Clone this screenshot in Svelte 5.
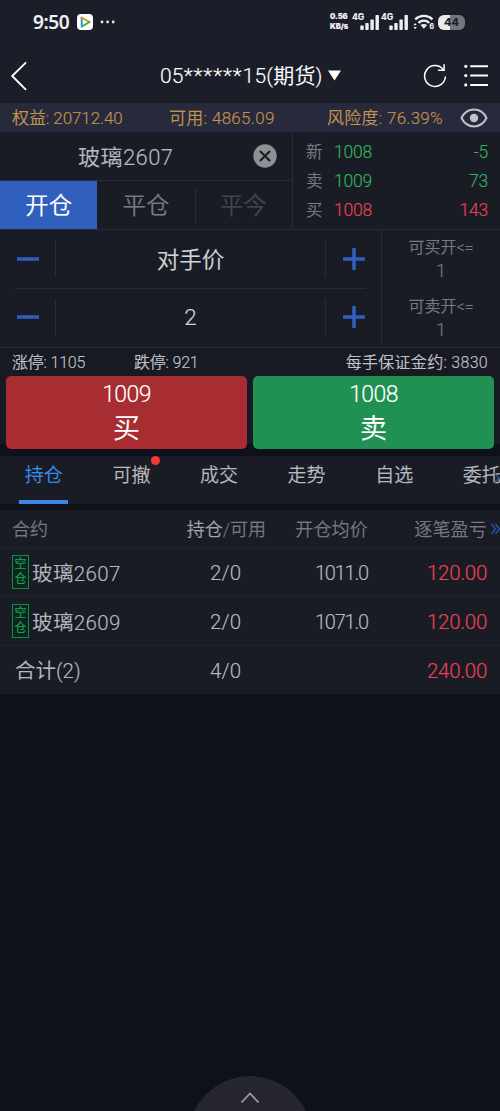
<script>
  const quotes = [
    { k: '新', price: '1008', vol: '-5', c: 'green' },
    { k: '卖', price: '1009', vol: '73', c: 'green' },
    { k: '买', price: '1008', vol: '143', c: 'red' }
  ];
  const tabs = ['持仓', '可撤', '成交', '走势', '自选', '委托'];
  const rows = [
    { name: '玻璃2607', qty: '2/0', avg: '1011.0', pl: '120.00' },
    { name: '玻璃2609', qty: '2/0', avg: '1071.0', pl: '120.00' }
  ];
  const steppers = ['对手价', '2'];
  const limits = ['可买开<=', '可卖开<='];
</script>

<div class="app">
  <div class="status">
    <span class="time">9:50</span>
    <svg class="play" width="16" height="16" viewBox="0 0 16 16">
      <rect width="16" height="16" rx="4" fill="#fff" />
      <path d="M4.7 3.8v8.6" stroke="#2499e8" stroke-width="2" stroke-linecap="round" />
      <path d="M4.7 3.6 12.6 8" stroke="#f58a28" stroke-width="2" stroke-linecap="round" />
      <path d="M12.6 8 5 12.4" stroke="#38b959" stroke-width="2" stroke-linecap="round" />
    </svg>
    <svg class="dots" width="16" height="4" viewBox="0 0 16 4" fill="#e8e9ec">
      <circle cx="2" cy="2" r="1.4" /><circle cx="7.6" cy="2" r="1.4" /><circle cx="13.2" cy="2" r="1.4" />
    </svg>
    <span class="speed"><b>0.56</b><b>KB/s</b></span>
    {#each [0, 1] as i (i)}
      <span class="signal">
        <b>4G</b>
        <svg width="20" height="15" viewBox="0 0 20 15" fill="#eceef1">
          <rect x="0.3" y="10.5" width="3.4" height="4.5" rx="0.7" />
          <rect x="5.3" y="8" width="3.4" height="7" rx="0.7" />
          <rect x="10.4" y="4.5" width="3.4" height="10.5" rx="0.7" />
          <rect x="15.5" y="0" width="3.4" height="15" rx="0.7" />
        </svg>
      </span>
    {/each}
    <span class="wifi">
      <svg width="22" height="16" viewBox="0 0 22 16" fill="none" stroke="#eceef1">
        <path d="M2.2 5.3c5-4.6 12.3-4.6 17.3 0M5.4 8.9c3.2-2.9 7.7-2.9 10.9 0" stroke-width="2.3" />
        <path d="M7.5 11.1c2-1.5 4.7-1.5 6.7 0l-3.3 3.6z" fill="#eceef1" stroke="none" />
        <path d="m.4 11.2 1.7-2.3 1.7 2.3zm0 1.8 1.7 2.3 1.7-2.3z" fill="#eceef1" stroke="none" />
      </svg>
      <b>6</b>
    </span>
    <span class="battery"><span>44</span></span>
  </div>

  <header>
    <svg width="16" height="30" viewBox="0 0 16 30" fill="none" stroke="#fff" stroke-width="1.8" stroke-linecap="round" stroke-linejoin="round"><path d="M14.6 1.8 1.2 15l13.4 13.4" /></svg>
    <div class="account"><span>05<i>******</i>15(期货)</span>
      <svg width="13" height="11" viewBox="0 0 13 11"><path d="M0 .5h13L6.5 10.5z" fill="#fff" /></svg>
    </div>
    <svg class="refresh" width="24" height="26" viewBox="0 0 24 26" fill="none" stroke="#fff" stroke-width="1.5"><path d="M20.2 6.6A10.4 10.4 0 1 0 22.4 13.5M21.1 1.3v6h-6" /></svg>
    <svg class="menu" width="24" height="24" viewBox="0 0 24 24" stroke="#fff" stroke-width="2" fill="#fff"><path d="M6.2 2.3H24M6.2 11.6H24M6.2 20.9H24" /><g stroke="none"><circle cx="1.8" cy="2.3" r="1.6" /><circle cx="1.8" cy="11.6" r="1.6" /><circle cx="1.8" cy="20.9" r="1.6" /></g></svg>
  </header>

  <div class="funds">
    <span>权益: 20712.40</span><span class="wide">可用: 4865.09</span><span>风险度: 76.39%</span>
    <svg width="28" height="20" viewBox="0 0 28 20"><path d="M1.5 10C7-1.2 21-1.2 26.5 10 21 21.2 7 21.2 1.5 10z" fill="none" stroke="#bfc2ce" stroke-width="2" /><circle cx="14" cy="10" r="4.2" fill="#bfc2ce" /></svg>
  </div>

  <section class="top">
    <div class="left">
      <div class="symbol">
        <span>玻璃2607</span>
        <svg width="24" height="24" viewBox="0 0 24 24"><circle cx="12" cy="12" r="11.7" fill="#8e9095" /><path d="m7 7 10 10M17 7 7 17" stroke="#1b1d25" stroke-width="2.2" /></svg>
      </div>
      <div class="modes">
        <div class="mode on">开仓</div>
        <div class="mode">平仓</div>
        <div class="mode off">平今</div>
      </div>
    </div>
    <div class="quotes">
      {#each quotes as q (q.k)}
        <div class="quote"><span class="k">{q.k}</span><span class={q.c}>{q.price}</span><span class="vol {q.c}">{q.vol}</span></div>
      {/each}
    </div>
  </section>

  <section class="order">
    <div class="steps">
      {#each steppers as s (s)}
        <div class="step">
          <div class="side"><svg width="24" height="24" viewBox="0 0 24 24"><path d="M1 12h22" stroke="#315fc0" stroke-width="3.5" /></svg></div>
          <div class="value">{s}</div>
          <div class="side plus"><svg width="24" height="24" viewBox="0 0 24 24"><path d="M1 12h22M12 1v22" stroke="#315fc0" stroke-width="3.5" /></svg></div>
        </div>
      {/each}
    </div>
    <div class="limits">
      {#each limits as l (l)}
        <div class="limit"><span>{l}</span><span>1</span></div>
      {/each}
    </div>
  </section>

  <div class="info"><span>涨停: 1105</span><span>跌停: 921</span><span>每手保证金约: 3830</span></div>

  <div class="actions">
    <div class="action buy"><span>1009</span><strong>买</strong></div>
    <div class="action sell"><span>1008</span><strong>卖</strong></div>
  </div>

  <nav>
    {#each tabs as t, i (t)}
      <div class="tab" class:active={i === 0}><span>{t}</span>{#if i === 1}<em></em>{/if}</div>
    {/each}
    <svg class="more" width="6" height="12" viewBox="0 0 6 12" fill="none" stroke="#2b57ad" stroke-width="1.3"><path d="m0 1 5 5-5 5" /></svg>
  </nav>

  <div class="table">
    <div class="tr head">
      <span>合约</span><span class="qty"><b>持仓</b>/可用</span><span class="avg">开仓均价</span><span class="pl">逐笔盈亏</span>
      <svg class="next" width="9" height="12" viewBox="0 0 9 12" fill="none" stroke="#2b57ad" stroke-width="1.3"><path d="m.5 1 4 5-4 5M4.5 1l4 5-4 5" /></svg>
    </div>
    {#each rows as r (r.name)}
      <div class="tr">
        <span class="name"><span class="tag"><i>空</i><i>仓</i></span>{r.name}</span>
        <span class="qty">{r.qty}</span><span class="avg">{r.avg}</span><span class="pl red">{r.pl}</span>
      </div>
    {/each}
    <div class="tr"><span class="total">合计(2)</span><span class="qty">4/0</span><span class="avg"></span><span class="pl red">240.00</span></div>
  </div>

  <div class="bottom">
    <div class="dome"><svg width="20" height="13" viewBox="0 0 20 13" fill="none" stroke="#a0a1a6" stroke-width="1.7"><path d="m1.5 11.5 8.5-9 8.5 9" /></svg></div>
  </div>
</div>

<style>
  :global(body) { margin: 0; background: #0e1119; }
  * { box-sizing: border-box; }
  i, em { font-style: normal; }
  svg { display: block; flex: none; }
  .app {
    width: 500px; height: 1111px; display: flex; flex-direction: column; overflow: hidden;
    background: #0e1119; color: #b8b9be; white-space: nowrap;
    font-family: Roboto, "Noto Sans CJK SC", sans-serif; font-weight: 350;
    -webkit-text-stroke: 0.15px currentColor;
  }
  .green { color: #31b45c; }
  .red { color: #ec4153; }

  .status { height: 48px; flex: none; display: flex; align-items: center; padding: 0 35px 4px 33px; background: #1b1e28; color: #f1f2f4; }
  .time { width: 44px; font: 600 19px/24px "Open Sans", sans-serif; letter-spacing: -0.4px; }
  .play { flex: none; }
  .dots { margin-left: 7px; }
  .speed { width: 21px; margin-left: auto; display: flex; flex-direction: column; font: 700 7.5px/10px Inter, sans-serif; letter-spacing: -0.1px; }
  .speed b:last-child { letter-spacing: 0; }
  .signal { position: relative; width: 28px; height: 15px; margin-left: 1px; display: flex; justify-content: flex-end; }
  .signal b { position: absolute; left: 0; top: -2px; font: 700 8.6px/8px Inter, sans-serif; }
  .wifi { position: relative; margin-left: 4px; }
  .wifi b { position: absolute; right: 1px; bottom: -1px; font: 700 7px/8px Inter, sans-serif; }
  .battery { width: 27px; height: 15px; margin-left: 3px; border-radius: 6px; display: flex; align-items: center; justify-content: center; background: linear-gradient(90deg, #e9eaec 46%, #74767c 46%); color: #1b1e28; font: 700 11px/15px Inter, sans-serif; }

  header { height: 55px; flex: none; display: flex; align-items: center; padding: 0 12px 0 11px; background: #1b1e28; color: #fff; }
  .account { flex: 1; margin-left: 133px; display: flex; align-items: center; gap: 5px; font-size: 21px; line-height: 30px; }
  .account span { width: 163px; letter-spacing: 0.2px; }
  .account i { letter-spacing: 0.9px; }
  .refresh { margin-right: 17px; }

  .funds { height: 29px; flex: none; display: grid; grid-template-columns: 157px 158px 133px 28px; align-items: center; padding-left: 12px; background: #262a3b; color: #c49350; font-size: 17px; line-height: 28px; letter-spacing: -0.1px; }
  .funds .wide { letter-spacing: 0.3px; }
  .funds .wide + span { letter-spacing: 0.25px; }

  .top { height: 98px; flex: none; display: flex; background: #191c25; border-bottom: 1px solid #2a2c35; }
  .left { width: 293px; border-right: 1px solid #2a2c35; }
  .symbol { height: 49px; display: flex; align-items: center; padding-left: 78px; border-bottom: 1px solid #2a2c35; font-size: 22px; }
  .symbol span { width: 175px; margin-top: -2px; letter-spacing: 0.45px; }
  .modes { height: 48px; display: flex; }
  .mode { position: relative; flex: 1; text-align: center; font-size: 23.5px; line-height: 50px; color: #77797f; }
  .mode.on { background: #315fbd; color: #fff; }
  .mode.off { color: #43454c; }
  .mode.off::before { content: ''; position: absolute; left: 0; top: 6px; height: 36px; border-left: 1px solid #2a2c35; }
  .quotes { flex: 1; display: flex; flex-direction: column; padding: 5px 12px 4px 13px; }
  .quote { height: 29px; display: flex; align-items: center; font-size: 17.5px; letter-spacing: -0.2px; }
  .k { width: 28px; font-size: 16.5px; line-height: 22px; margin-top: 2px; color: #797b82; }
  .vol { margin-left: auto; }

  .order { height: 118px; flex: none; display: flex; background: #191c25; border-bottom: 1px solid #2c2e36; }
  .steps { width: 382px; padding: 0 15px; border-right: 1px solid #2a2c35; }
  .step { height: 58px; display: flex; align-items: center; padding-bottom: 2px; }
  .step:first-child { height: 59px; padding-bottom: 0; border-bottom: 1px solid #2a2c35; }
  .side { width: 41px; height: 36px; padding-left: 1px; border-right: 1px solid #2a2c35; display: flex; align-items: center; }
  .side.plus { border-right: 0; border-left: 1px solid #2a2c35; justify-content: flex-end; }
  .value { flex: 1; text-align: center; margin-top: -2px; font-size: 22.5px; color: #d3d4d7; }
  .step:last-child .value { margin-top: 0; }
  .limits { flex: 1; }
  .limit { height: 59px; padding-top: 7px; display: flex; flex-direction: column; align-items: center; font-size: 16px; line-height: 22px; color: #777980; }
  .limit span + span { font-size: 18px; line-height: 23px; }

  .info { height: 28px; flex: none; display: grid; grid-template-columns: 122px auto auto; padding: 0 12px; background: #171a23; color: #c1c2c6; font-size: 16px; line-height: 30px; letter-spacing: -0.2px; }
  .info span:last-child { text-align: right; letter-spacing: 0.3px; }

  .actions { height: 80px; flex: none; display: flex; gap: 6px; padding: 0 6px 7px; background: linear-gradient(#171a23 68px, #0e1119 68px); }
  .action { flex: 1; display: flex; flex-direction: column; align-items: center; border-radius: 5px; color: #fff; }
  .action span { font-size: 23px; line-height: 37px; letter-spacing: -0.6px; }
  .action strong { font-size: 27px; line-height: 32px; font-weight: 350; }
  .buy { background: #a72d33; }
  .sell { background: #209153; }

  nav { position: relative; height: 48px; flex: none; display: flex; background: #191c25; overflow: hidden; }
  .tab { position: relative; width: 87.6px; flex: none; text-align: center; font-size: 19px; line-height: 40px; }
  .tab.active { color: #3a88e0; }
  .tab.active::after { content: ''; position: absolute; left: 19px; bottom: 0; width: 49px; height: 4px; background: #3a88e0; }
  .tab em { position: absolute; left: 63px; top: 0; width: 9px; height: 9px; border-radius: 50%; background: #f03b32; }
  .more { position: absolute; right: 0; top: 16px; }

  .table { flex: none; margin-top: 6px; background: #191c25; }
  .tr { height: 49px; display: grid; grid-template-columns: 161px 68px 127px 1fr; align-items: center; padding: 0 13px 0 12px; border-top: 1px solid #20232c; font-size: 20.5px; }
  .tr.head { position: relative; height: 37px; padding-bottom: 2px; border-top: 0; font-size: 18px; color: #77797f; }
  .head b { color: #a3a5aa; font-weight: 350; }
  .head .qty { margin-right: -25px; }
  .qty, .avg, .pl { text-align: right; padding-top: 1px; }
  .avg { font-size: 20px; letter-spacing: -1.2px; }
  .head .avg { font-size: 18px; letter-spacing: 0.2px; }
  .head span { padding-top: 0; }
  .pl { letter-spacing: -0.3px; }
  .head .pl { letter-spacing: 0.2px; }
  .next { position: absolute; right: 0; top: 13px; }
  .name { display: flex; align-items: center; gap: 3px; letter-spacing: 0.4px; }
  .tag { width: 17px; height: 34px; border: 1px solid #148a43; display: flex; flex-direction: column; align-items: center; justify-content: center; background: #0d2520; color: #1aa34e; font-size: 12px; line-height: 15px; letter-spacing: 0; font-weight: 400; }
  .total { padding-left: 3px; margin-top: -2px; }

  .bottom { flex: 1; display: flex; flex-direction: column; justify-content: flex-end; align-items: center; overflow: hidden; }
  .dome { width: 124px; height: 124px; margin-bottom: -89px; flex: none; border-radius: 50%; background: #25262f; display: flex; justify-content: center; padding-top: 15px; }
</style>
